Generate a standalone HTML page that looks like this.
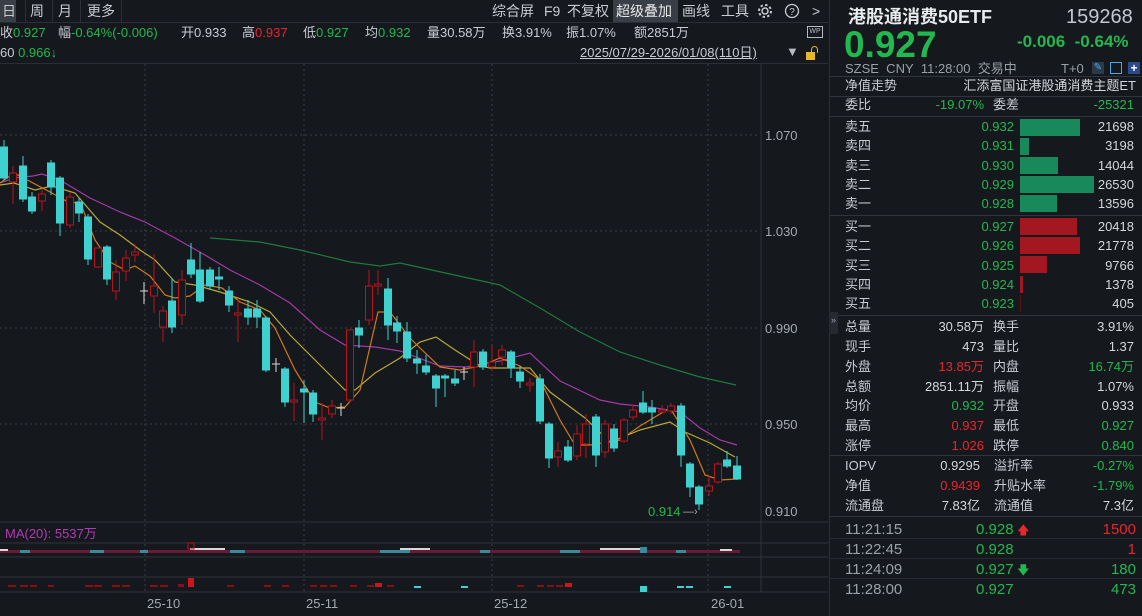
<!DOCTYPE html>
<html><head><meta charset="utf-8"><style>
*{margin:0;padding:0;box-sizing:border-box}
body{width:1142px;height:616px;background:#15181d;color:#c8ccd2;font-family:"Liberation Sans","Noto Sans CJK SC",sans-serif;overflow:hidden;position:relative}
.a{position:absolute;white-space:nowrap;line-height:16px}
.g{color:#22b84f}.r{color:#e8262d}.w{color:#d4d7dc}.gy{color:#9aa0a8}
.tb{font-size:14px;top:3px;color:#c8ccd2}
.row{font-size:13px}
.rp{position:absolute;left:829px;top:0;width:313px;height:616px;background:#15181d;border-left:1px solid #2c3038}
.rp .a{font-size:13px}
.cj{margin-top:-2px}
.ln{position:absolute;left:0;width:313px;height:1px;background:#30343c}
.bar{position:absolute;height:17px}
</style></head><body>
<!-- top toolbar -->
<div class="a" style="left:0;top:0;width:16px;height:22px;background:#3a3e46"></div>
<div class="a tb" style="left:2px">日</div>
<div class="a tb" style="left:30px">周</div>
<div class="a tb" style="left:58px">月</div>
<div class="a tb" style="left:87px">更多</div>
<div class="a" style="left:25px;top:0;width:1px;height:22px;background:#2c3038"></div>
<div class="a" style="left:52px;top:0;width:1px;height:22px;background:#2c3038"></div>
<div class="a" style="left:80px;top:0;width:1px;height:22px;background:#2c3038"></div>
<div class="a" style="left:121px;top:0;width:1px;height:22px;background:#2c3038"></div>
<div class="a" style="left:613px;top:0;width:65px;height:22px;background:#3a3e46"></div>
<div class="a tb" style="left:492px">综合屏</div>
<div class="a tb" style="left:544px">F9</div>
<div class="a tb" style="left:567px">不复权</div>
<div class="a tb" style="left:616px;color:#e6e8ea">超级叠加</div>
<div class="a tb" style="left:682px">画线</div>
<div class="a tb" style="left:721px">工具</div>
<svg class="a" style="left:757px;top:3px" width="16" height="16" viewBox="0 0 16 16"><circle cx="8" cy="8" r="3" fill="none" stroke="#c8ccd2" stroke-width="1.5"/><circle cx="8" cy="8" r="6" fill="none" stroke="#c8ccd2" stroke-width="2" stroke-dasharray="2.4 2.3"/></svg>
<svg class="a" style="left:784px;top:3px" width="16" height="16" viewBox="0 0 16 16"><circle cx="8" cy="8" r="6.5" fill="none" stroke="#c8ccd2" stroke-width="1.3"/><text x="8" y="12" font-size="10" fill="#c8ccd2" text-anchor="middle" font-family="Liberation Sans">?</text></svg>
<div class="a tb" style="left:812px;color:#c8ccd2">&gt;</div>
<div class="a" style="left:0;top:22px;width:828px;height:1px;background:#2a2e35"></div>
<!-- row 2 -->
<div class="a row" style="left:0;top:25px">收<span class="g">0.927</span></div>
<div class="a row" style="left:58px;top:25px">幅<span class="g">-0.64%(-0.006)</span></div>
<div class="a row" style="left:181px;top:25px">开0.933</div>
<div class="a row" style="left:242px;top:25px">高<span class="r">0.937</span></div>
<div class="a row" style="left:303px;top:25px">低<span class="g">0.927</span></div>
<div class="a row" style="left:365px;top:25px">均<span class="g">0.932</span></div>
<div class="a row" style="left:427px;top:25px">量30.58万</div>
<div class="a row" style="left:502px;top:25px">换3.91%</div>
<div class="a row" style="left:566px;top:25px">振1.07%</div>
<div class="a row" style="left:634px;top:25px">额2851万</div>
<div class="a" style="left:807px;top:26px;width:16px;height:12px;border:1px solid #b8bcc2;font-size:7px;color:#b8bcc2;text-align:center;line-height:10px">WP</div>
<div class="a row" style="left:0;top:45px">60 <span class="g">0.966↓</span></div>
<div class="a row" style="left:580px;top:45px;text-decoration:underline">2025/07/29-2026/01/08(110日)</div>
<div class="a" style="left:786px;top:44px;font-size:13px;color:#b8bcc2">▼</div>
<div class="a" style="left:806px;top:52px;width:9px;height:8px;background:#e8b62a"></div>
<div class="a" style="top:46px;width:7px;height:7px;border:1.5px solid #e8b62a;border-bottom:none;border-radius:4px 4px 0 0;left:811px"></div>
<div class="a" style="left:0;top:63px;width:828px;height:1px;background:#2a2e35"></div>

<svg class="a" style="left:0;top:64px" width="828" height="552" viewBox="0 64 828 552">
<g stroke="#3a3e46" stroke-dasharray="2 3" stroke-width="1">
<line x1="0" y1="135" x2="760" y2="135"/><line x1="0" y1="231" x2="760" y2="231"/><line x1="0" y1="328" x2="760" y2="328"/><line x1="0" y1="424" x2="760" y2="424"/>
<line x1="145" y1="64" x2="145" y2="592"/><line x1="304" y1="64" x2="304" y2="592"/><line x1="492" y1="64" x2="492" y2="592"/><line x1="708" y1="64" x2="708" y2="592"/>
</g>
<line x1="761" y1="64" x2="761" y2="592" stroke="#30343c"/>
<g stroke="#30343c"><line x1="0" y1="522" x2="828" y2="522"/><line x1="0" y1="543" x2="828" y2="543"/><line x1="0" y1="557" x2="828" y2="557"/><line x1="0" y1="577" x2="828" y2="577"/><line x1="0" y1="592" x2="828" y2="592"/></g>
<g font-family="Liberation Sans" font-size="13" fill="#a4a9b0">
<text x="765" y="140">1.070</text><text x="765" y="236">1.030</text><text x="765" y="333">0.990</text><text x="765" y="429">0.950</text><text x="765" y="516">0.910</text>
<text x="147" y="608">25-10</text><text x="306" y="608">25-11</text><text x="494" y="608">25-12</text><text x="711" y="608">26-01</text>
</g>
<text x="648" y="516" font-family="Liberation Sans" font-size="13" fill="#22b84f">0.914</text><text x="683" y="515" font-size="11" fill="#aaa" font-family="Liberation Sans">—›</text>
<text x="5" y="538" font-family="Liberation Sans" font-size="13" fill="#b43ab4">MA(20): 5537万</text>
<polyline fill="none" stroke="#1e7a3c" stroke-width="1.2" points="210,238 260,242 300,250 350,262 380,266 400,263 450,274 500,285 540,308 580,332 620,352 660,365 700,377 736,385"/>
<polyline fill="none" stroke="#a23aa8" stroke-width="1.2" points="0,183 14,178 33,176 42,174 60,180 80,192 90,198 120,212 145,222 175,238 205,255 230,270 260,285 290,303 320,330 345,345 375,347 400,351 440,366 466,367 500,361 530,353 560,381 600,400 620,404 650,407 680,412 700,428 720,440 737,445"/>
<polyline fill="none" stroke="#b8a83a" stroke-width="1.2" points="0,185 14,183 35,190 52,186 75,193 100,222 120,235 140,250 155,260 175,282 195,285 220,292 250,302 270,312 290,335 320,365 345,390 355,390 375,373 400,358 420,342 436,337 455,350 480,366 490,368 530,368 550,392 585,418 610,442 640,430 670,422 685,432 710,443 735,457"/>
<polyline fill="none" stroke="#d07a1a" stroke-width="1.2" points="0,183 14,173 50,192 70,203 80,202 95,240 110,262 125,270 135,266 150,276 165,295 175,298 190,296 205,285 222,288 240,302 260,310 275,328 295,370 315,402 330,408 345,407 360,390 378,312 390,312 410,338 420,348 440,367 460,370 480,366 500,358 520,366 540,380 560,420 575,445 590,445 620,440 640,426 670,408 690,440 705,475 720,480 737,479"/>
<g stroke-width="1">
<g stroke="#3fd0d0" fill="#3fd0d0">
<line x1="4" y1="140" x2="4" y2="180"/><rect x="0.5" y="147" width="7" height="31"/>
<line x1="23" y1="156" x2="23" y2="202"/><rect x="19.5" y="166" width="7" height="33"/>
<line x1="32" y1="192" x2="32" y2="214"/><rect x="28.5" y="197" width="7" height="14"/>
<line x1="51" y1="160" x2="51" y2="195"/><rect x="47.5" y="163" width="7" height="24"/>
<line x1="60" y1="176" x2="60" y2="236"/><rect x="56.5" y="178" width="7" height="45"/>
<line x1="79" y1="198" x2="79" y2="222"/><rect x="75.5" y="202" width="7" height="11"/>
<line x1="88" y1="214" x2="88" y2="265"/><rect x="84.5" y="217" width="7" height="42"/>
<line x1="107" y1="245" x2="107" y2="285"/><rect x="103.5" y="247" width="7" height="32"/>
<line x1="172" y1="278" x2="172" y2="333"/><rect x="168.5" y="301" width="7" height="26"/>
<line x1="191" y1="243" x2="191" y2="278"/><rect x="187.5" y="260" width="7" height="14"/>
<line x1="200" y1="252" x2="200" y2="303"/><rect x="196.5" y="270" width="7" height="31"/>
<line x1="210" y1="267" x2="210" y2="290"/><rect x="206.5" y="270" width="7" height="16"/>
<line x1="219" y1="267" x2="219" y2="290"/><rect x="215.5" y="277" width="7" height="2"/>
<line x1="229" y1="286" x2="229" y2="312"/><rect x="225.5" y="291" width="7" height="14"/>
<line x1="248" y1="300" x2="248" y2="325"/><rect x="244.5" y="309" width="7" height="8"/>
<line x1="257" y1="300" x2="257" y2="328"/><rect x="253.5" y="309" width="7" height="8"/>
<line x1="266" y1="316" x2="266" y2="372"/><rect x="262.5" y="318" width="7" height="52"/>
<line x1="285" y1="367" x2="285" y2="407"/><rect x="281.5" y="369" width="7" height="33"/>
<line x1="304" y1="380" x2="304" y2="423"/><rect x="300.5" y="389" width="7" height="3"/>
<line x1="313" y1="390" x2="313" y2="422"/><rect x="309.5" y="393" width="7" height="21"/>
<line x1="359" y1="320" x2="359" y2="348"/><rect x="355.5" y="328" width="7" height="7"/>
<line x1="388" y1="278" x2="388" y2="340"/><rect x="384.5" y="289" width="7" height="36"/>
<line x1="397" y1="316" x2="397" y2="343"/><rect x="393.5" y="323" width="7" height="8"/>
<line x1="407" y1="322" x2="407" y2="362"/><rect x="403.5" y="332" width="7" height="26"/>
<line x1="417" y1="350" x2="417" y2="374"/><rect x="413.5" y="359" width="7" height="4"/>
<line x1="426" y1="355" x2="426" y2="375"/><rect x="422.5" y="366" width="7" height="6"/>
<line x1="436" y1="374" x2="436" y2="407"/><rect x="432.5" y="376" width="7" height="12"/>
<line x1="445" y1="374" x2="445" y2="397"/><rect x="441.5" y="376" width="7" height="2"/>
<line x1="455" y1="370" x2="455" y2="386"/><rect x="451.5" y="379" width="7" height="4"/>
<line x1="483" y1="349" x2="483" y2="370"/><rect x="479.5" y="352" width="7" height="15"/>
<line x1="511" y1="350" x2="511" y2="378"/><rect x="507.5" y="352" width="7" height="16"/>
<line x1="520" y1="366" x2="520" y2="388"/><rect x="516.5" y="372" width="7" height="9"/>
<line x1="540" y1="374" x2="540" y2="424"/><rect x="536.5" y="379" width="7" height="42"/>
<line x1="549" y1="422" x2="549" y2="468"/><rect x="545.5" y="424" width="7" height="34"/>
<line x1="568" y1="440" x2="568" y2="462"/><rect x="564.5" y="447" width="7" height="13"/>
<line x1="596" y1="414" x2="596" y2="467"/><rect x="592.5" y="417" width="7" height="38"/>
<line x1="614" y1="424" x2="614" y2="452"/><rect x="610.5" y="429" width="7" height="19"/>
<line x1="643" y1="391" x2="643" y2="414"/><rect x="639.5" y="403" width="7" height="9"/>
<line x1="652" y1="400" x2="652" y2="424"/><rect x="648.5" y="408" width="7" height="4"/>
<line x1="681" y1="403" x2="681" y2="467"/><rect x="677.5" y="406" width="7" height="49"/>
<line x1="690" y1="462" x2="690" y2="497"/><rect x="686.5" y="464" width="7" height="23"/>
<line x1="699" y1="485" x2="699" y2="510"/><rect x="695.5" y="487" width="7" height="17"/>
<line x1="727" y1="451" x2="727" y2="468"/><rect x="723.5" y="460" width="7" height="6"/>
<line x1="737" y1="456" x2="737" y2="480"/><rect x="733.5" y="466" width="7" height="13"/>
</g>
<g stroke="#b8141c" fill="#15181d">
<line x1="13" y1="166" x2="13" y2="204"/><rect x="9.5" y="173" width="7" height="9"/>
<line x1="42" y1="190" x2="42" y2="211"/><rect x="38.5" y="194" width="7" height="7"/>
<line x1="70" y1="192" x2="70" y2="228"/><rect x="66.5" y="197" width="7" height="28"/>
<line x1="98" y1="248" x2="98" y2="268"/><rect x="94.5" y="248" width="7" height="19"/>
<line x1="116" y1="260" x2="116" y2="300"/><rect x="112.5" y="272" width="7" height="19"/>
<line x1="126" y1="250" x2="126" y2="281"/><rect x="122.5" y="258" width="7" height="13"/>
<line x1="135" y1="244" x2="135" y2="262"/><rect x="131.5" y="252" width="7" height="3"/>
<line x1="154" y1="254" x2="154" y2="313"/><rect x="150.5" y="286" width="7" height="10"/>
<line x1="163" y1="306" x2="163" y2="342"/><rect x="159.5" y="311" width="7" height="16"/>
<line x1="182" y1="270" x2="182" y2="325"/><rect x="178.5" y="280" width="7" height="35"/>
<line x1="238" y1="300" x2="238" y2="342"/><rect x="234.5" y="313" width="7" height="2"/>
<line x1="294" y1="383" x2="294" y2="421"/><rect x="290.5" y="400" width="7" height="2"/>
<line x1="322" y1="403" x2="322" y2="440"/><rect x="318.5" y="418" width="7" height="2"/>
<line x1="332" y1="400" x2="332" y2="418"/><rect x="328.5" y="406" width="7" height="8"/>
<line x1="350" y1="330" x2="350" y2="402"/><rect x="346.5" y="330" width="7" height="70"/>
<line x1="369" y1="270" x2="369" y2="325"/><rect x="365.5" y="286" width="7" height="34"/>
<line x1="378" y1="270" x2="378" y2="295"/><rect x="374.5" y="284" width="7" height="2"/>
<line x1="474" y1="340" x2="474" y2="387"/><rect x="470.5" y="352" width="7" height="15"/>
<line x1="492" y1="345" x2="492" y2="370"/><rect x="488.5" y="362" width="7" height="5"/>
<line x1="502" y1="345" x2="502" y2="365"/><rect x="498.5" y="350" width="7" height="7"/>
<line x1="530" y1="378" x2="530" y2="392"/><rect x="526.5" y="383" width="7" height="2"/>
<line x1="558" y1="442" x2="558" y2="467"/><rect x="554.5" y="451" width="7" height="6"/>
<line x1="577" y1="425" x2="577" y2="460"/><rect x="573.5" y="434" width="7" height="22"/>
<line x1="586" y1="414" x2="586" y2="458"/><rect x="582.5" y="424" width="7" height="20"/>
<line x1="605" y1="420" x2="605" y2="458"/><rect x="601.5" y="424" width="7" height="28"/>
<line x1="624" y1="418" x2="624" y2="443"/><rect x="620.5" y="420" width="7" height="21"/>
<line x1="633" y1="405" x2="633" y2="420"/><rect x="629.5" y="410" width="7" height="7"/>
<line x1="662" y1="405" x2="662" y2="414"/><rect x="658.5" y="410" width="7" height="2"/>
<line x1="671" y1="403" x2="671" y2="414"/><rect x="667.5" y="406" width="7" height="5"/>
<line x1="709" y1="476" x2="709" y2="496"/><rect x="705.5" y="486" width="7" height="5"/>
<line x1="718" y1="462" x2="718" y2="484"/><rect x="714.5" y="464" width="7" height="18"/>
</g>
<g stroke="#d8d8d8">
<line x1="144" y1="282" x2="144" y2="304"/><line x1="140" y1="291" x2="148" y2="291"/>
<line x1="276" y1="358" x2="276" y2="372"/><line x1="272" y1="364" x2="280" y2="364"/>
<line x1="341" y1="403" x2="341" y2="416"/><line x1="337" y1="408" x2="345" y2="408"/>
<line x1="464" y1="367" x2="464" y2="380"/><line x1="460" y1="372" x2="468" y2="372"/>
</g>
</g>
<!-- volume strip -->
<rect x="0" y="550" width="740" height="3" fill="#6a1a36"/>
<g fill="#3a8a9a"><rect x="20" y="550" width="10" height="3"/><rect x="90" y="550" width="14" height="3"/><rect x="140" y="550" width="8" height="3"/><rect x="230" y="550" width="15" height="3"/><rect x="380" y="550" width="30" height="3"/><rect x="480" y="550" width="10" height="3"/><rect x="560" y="550" width="20" height="3"/><rect x="640" y="547" width="7" height="6"/><rect x="676" y="550" width="10" height="3"/></g>
<g fill="#d8d8d8"><rect x="0" y="549" width="8" height="2"/><rect x="190" y="548" width="35" height="2"/><rect x="400" y="548" width="30" height="2"/><rect x="600" y="548" width="40" height="2"/><rect x="720" y="549" width="12" height="2"/></g>
<rect x="188" y="543" width="6" height="6" fill="none" stroke="#b8141c"/>
<g fill="#8a0e14"><rect x="8" y="585" width="8" height="2"/><rect x="20" y="585" width="8" height="2"/><rect x="30" y="585" width="7" height="2"/><rect x="48" y="585" width="6" height="2"/><rect x="85" y="585" width="8" height="2"/><rect x="94" y="585" width="8" height="2"/><rect x="112" y="585" width="8" height="2"/><rect x="122" y="585" width="8" height="2"/><rect x="150" y="585" width="8" height="2"/><rect x="160" y="585" width="8" height="2"/><rect x="178" y="584" width="6" height="3"/><rect x="227" y="585" width="7" height="2"/><rect x="264" y="585" width="7" height="2"/><rect x="282" y="585" width="7" height="2"/><rect x="310" y="585" width="7" height="2"/><rect x="320" y="585" width="7" height="2"/><rect x="330" y="585" width="7" height="2"/><rect x="350" y="585" width="7" height="2"/><rect x="367" y="585" width="7" height="2"/><rect x="387" y="585" width="7" height="2"/><rect x="517" y="585" width="7" height="2"/><rect x="537" y="585" width="7" height="2"/><rect x="547" y="585" width="7" height="2"/><rect x="556" y="585" width="7" height="2"/></g>
<rect x="188" y="578" width="6" height="9" fill="#d0141c"/><rect x="375" y="583" width="7" height="4" fill="#d0141c"/><rect x="565" y="583" width="7" height="4" fill="#d0141c"/>
<g fill="#3fd0d0"><rect x="414" y="586" width="7" height="2"/><rect x="461" y="586" width="7" height="2"/><rect x="640" y="586" width="7" height="6"/><rect x="677" y="586" width="7" height="2"/><rect x="686" y="586" width="7" height="2"/><rect x="724" y="586" width="7" height="2"/></g>
</svg>

<!-- right panel -->
<div class="rp">
<div class="a" style="left:18px;top:6px;font-size:18px;font-weight:bold;color:#e8eaec;line-height:22px">港股通消费50ETF</div>
<div class="a" style="left:236px;top:6px;font-size:20px;color:#c4c8ce;line-height:22px">159268</div>
<div class="a g" style="left:14px;top:25px;font-size:37px;font-weight:bold;line-height:40px">0.927</div>
<div class="a g" style="left:187px;top:34px;font-weight:bold"><span style="font-size:17px">-0.006&nbsp;&nbsp;-0.64%</span></div>
<div class="a gy" style="left:15px;top:61px">SZSE&nbsp; CNY&nbsp; 11:28:00&nbsp; 交易中</div>
<div class="a gy" style="left:231px;top:61px">T+0</div>
<div class="a" style="left:262px;top:62px;width:12px;height:12px;background:#2a3a4a;color:#4aa8e8;font-size:10px;text-align:center;line-height:12px">✎</div>
<div class="a" style="left:280px;top:62px;width:12px;height:12px;border:1px solid #4aa8e8"></div>
<div class="a" style="left:298px;top:62px;width:12px;height:12px;background:#2a4a8a;color:#fff;font-size:12px;text-align:center;line-height:12px;font-weight:bold">+</div>
<div class="ln" style="top:76px"></div>
<div class="a cj" style="left:15px;top:80px">净值走势</div>
<div class="a w cj" style="right:6px;top:80px">汇添富国证港股通消费主题ET</div>
<div class="ln" style="top:96px"></div>
<div class="a cj" style="left:15px;top:99px">委比</div>
<div class="a g" style="right:158px;top:97px">-19.07%</div>
<div class="a cj" style="left:163px;top:99px">委差</div>
<div class="a g" style="right:8px;top:97px">-25321</div>
<div class="ln" style="top:116px"></div>

<div class="a cj" style="left:15px;top:121px">卖五</div><div class="a g" style="right:128px;top:119px">0.932</div><div class="bar" style="left:190px;top:119px;width:60px;background:#17895a"></div><div class="a w" style="right:8px;top:119px">21698</div>
<div class="a cj" style="left:15px;top:140px">卖四</div><div class="a g" style="right:128px;top:138px">0.931</div><div class="bar" style="left:190px;top:138px;width:9px;background:#17895a"></div><div class="a w" style="right:8px;top:138px">3198</div>
<div class="a cj" style="left:15px;top:160px">卖三</div><div class="a g" style="right:128px;top:158px">0.930</div><div class="bar" style="left:190px;top:157px;width:38px;background:#17895a"></div><div class="a w" style="right:8px;top:158px">14044</div>
<div class="a cj" style="left:15px;top:179px">卖二</div><div class="a g" style="right:128px;top:177px">0.929</div><div class="bar" style="left:190px;top:176px;width:74px;background:#17895a"></div><div class="a w" style="right:8px;top:177px">26530</div>
<div class="a cj" style="left:15px;top:198px">卖一</div><div class="a g" style="right:128px;top:196px">0.928</div><div class="bar" style="left:190px;top:195px;width:37px;background:#17895a"></div><div class="a w" style="right:8px;top:196px">13596</div>
<div class="ln" style="top:215px"></div>
<div class="a cj" style="left:15px;top:221px">买一</div><div class="a g" style="right:128px;top:219px">0.927</div><div class="bar" style="left:190px;top:218px;width:57px;background:#a31820"></div><div class="a w" style="right:8px;top:219px">20418</div>
<div class="a cj" style="left:15px;top:240px">买二</div><div class="a g" style="right:128px;top:238px">0.926</div><div class="bar" style="left:190px;top:237px;width:60px;background:#a31820"></div><div class="a w" style="right:8px;top:238px">21778</div>
<div class="a cj" style="left:15px;top:260px">买三</div><div class="a g" style="right:128px;top:258px">0.925</div><div class="bar" style="left:190px;top:256px;width:27px;background:#a31820"></div><div class="a w" style="right:8px;top:258px">9766</div>
<div class="a cj" style="left:15px;top:279px">买四</div><div class="a g" style="right:128px;top:277px">0.924</div><div class="bar" style="left:190px;top:276px;width:3px;background:#a31820"></div><div class="a w" style="right:8px;top:277px">1378</div>
<div class="a cj" style="left:15px;top:298px">买五</div><div class="a g" style="right:128px;top:296px">0.923</div><div class="bar" style="left:190px;top:295px;width:1px;background:#5a1418"></div><div class="a w" style="right:8px;top:296px">405</div>
<div class="ln" style="top:315px"></div>

<div class="a cj" style="left:15px;top:321px">总量</div><div class="a w cj" style="right:158px;top:321px">30.58万</div><div class="a cj" style="left:163px;top:321px">换手</div><div class="a w" style="right:8px;top:319px">3.91%</div>
<div class="a cj" style="left:15px;top:341px">现手</div><div class="a w" style="right:158px;top:339px">473</div><div class="a cj" style="left:163px;top:341px">量比</div><div class="a w" style="right:8px;top:339px">1.37</div>
<div class="a cj" style="left:15px;top:361px">外盘</div><div class="a r cj" style="right:158px;top:361px">13.85万</div><div class="a cj" style="left:163px;top:361px">内盘</div><div class="a g cj" style="right:8px;top:361px">16.74万</div>
<div class="a cj" style="left:15px;top:381px">总额</div><div class="a w cj" style="right:158px;top:381px">2851.11万</div><div class="a cj" style="left:163px;top:381px">振幅</div><div class="a w" style="right:8px;top:379px">1.07%</div>
<div class="a cj" style="left:15px;top:400px">均价</div><div class="a g" style="right:158px;top:398px">0.932</div><div class="a cj" style="left:163px;top:400px">开盘</div><div class="a w" style="right:8px;top:398px">0.933</div>
<div class="a cj" style="left:15px;top:420px">最高</div><div class="a r" style="right:158px;top:418px">0.937</div><div class="a cj" style="left:163px;top:420px">最低</div><div class="a g" style="right:8px;top:418px">0.927</div>
<div class="a cj" style="left:15px;top:440px">涨停</div><div class="a r" style="right:158px;top:438px">1.026</div><div class="a cj" style="left:163px;top:440px">跌停</div><div class="a g" style="right:8px;top:438px">0.840</div>
<div class="ln" style="top:455px"></div>
<div class="a" style="left:15px;top:458px">IOPV</div><div class="a w" style="right:162px;top:458px">0.9295</div><div class="a cj" style="left:164px;top:460px">溢折率</div><div class="a g" style="right:8px;top:458px">-0.27%</div>
<div class="a cj" style="left:15px;top:480px">净值</div><div class="a r" style="right:162px;top:478px">0.9439</div><div class="a cj" style="left:164px;top:480px">升贴水率</div><div class="a g" style="right:8px;top:478px">-1.79%</div>
<div class="a cj" style="left:15px;top:500px">流通盘</div><div class="a w cj" style="right:162px;top:500px">7.83亿</div><div class="a cj" style="left:164px;top:500px">流通值</div><div class="a w cj" style="right:8px;top:500px">7.3亿</div>
<div class="ln" style="top:516px"></div>
<div class="a gy" style="left:15px;top:521px;line-height:17px"><span style="font-size:15px">11:21:15</span></div><div class="a g" style="left:146px;top:521px;line-height:17px"><span style="font-size:15px">0.928</span> <span class="r" style="font-size:12px">🡅</span></div><div class="a r" style="right:6px;top:521px;line-height:17px"><span style="font-size:15px">1500</span></div>
<div class="ln" style="top:538px;background:#262a30"></div>
<div class="a gy" style="left:15px;top:541px;line-height:17px"><span style="font-size:15px">11:22:45</span></div><div class="a g" style="left:146px;top:541px;line-height:17px"><span style="font-size:15px">0.928</span></div><div class="a r" style="right:6px;top:541px;line-height:17px"><span style="font-size:15px">1</span></div>
<div class="ln" style="top:558px;background:#262a30"></div>
<div class="a gy" style="left:15px;top:561px;line-height:17px"><span style="font-size:15px">11:24:09</span></div><div class="a g" style="left:146px;top:561px;line-height:17px"><span style="font-size:15px">0.927</span> <span style="font-size:12px">🡇</span></div><div class="a g" style="right:6px;top:561px;line-height:17px"><span style="font-size:15px">180</span></div>
<div class="ln" style="top:578px;background:#262a30"></div>
<div class="a gy" style="left:15px;top:581px;line-height:17px"><span style="font-size:15px">11:28:00</span></div><div class="a g" style="left:146px;top:581px;line-height:17px"><span style="font-size:15px">0.927</span></div><div class="a g" style="right:6px;top:581px;line-height:17px"><span style="font-size:15px">473</span></div>
</div>
<div class="a" style="left:829px;top:312px;width:9px;height:22px;background:#262a30;color:#9aa0a8;font-size:9px;text-align:center">»</div>
</body></html>
